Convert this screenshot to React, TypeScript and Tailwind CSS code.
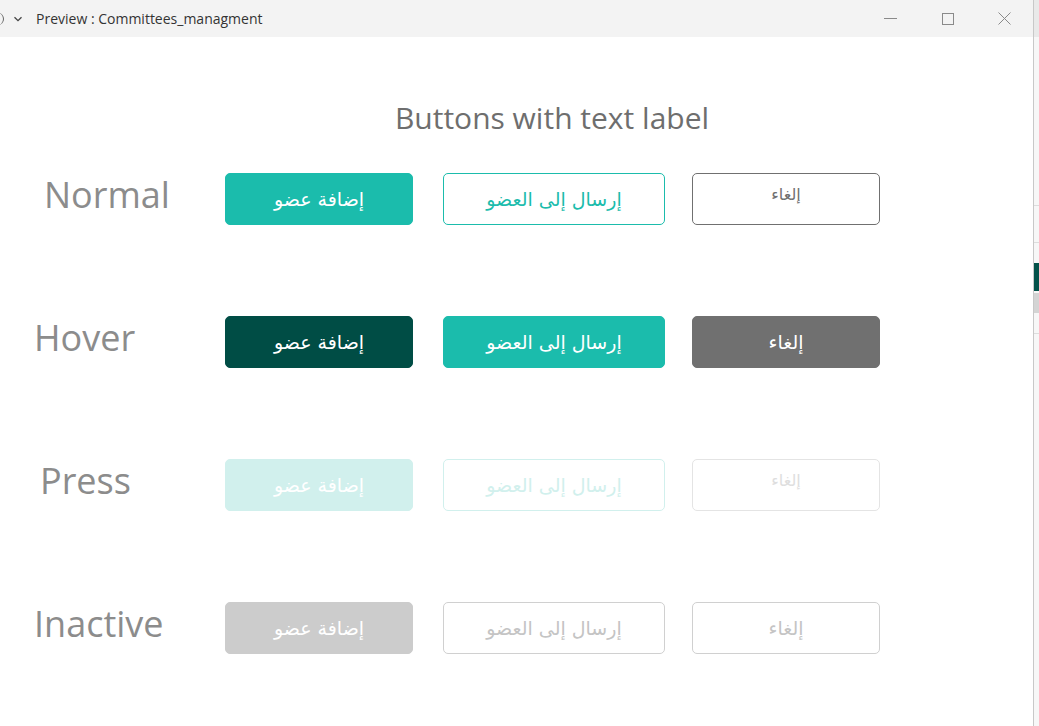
import React from 'react'

type Variant = {
  add: string
  send: string
  cancel: string
  cancelText?: string
}

const rows: { label: string; pad: string; v: Variant }[] = [
  {
    label: 'Normal',
    pad: 'pl-[44px]',
    v: {
      add: 'bg-[#1bbcac] text-white border-[#1bbcac]',
      send: 'bg-white text-[#1bbcac] border-[#1bbcac]',
      cancel: 'bg-white text-[#707070] border-[#707070]',
      cancelText: 'text-[16px] -mt-[8px]',
    },
  },
  {
    label: 'Hover',
    pad: 'pl-[34px]',
    v: {
      add: 'bg-[#004d45] text-white border-[#004d45]',
      send: 'bg-[#1bbcac] text-white border-[#1bbcac]',
      cancel: 'bg-[#707070] text-white border-[#707070]',
    },
  },
  {
    label: 'Press',
    pad: 'pl-[40px]',
    v: {
      add: 'bg-[#d1f0ed] text-white border-[#d1f0ed]',
      send: 'bg-white text-[#d1f0ed] border-[#d1f0ed]',
      cancel: 'bg-white text-[#dedede] border-[#e4e4e4]',
      cancelText: 'text-[16px] -mt-[8px]',
    },
  },
  {
    label: 'Inactive',
    pad: 'pl-[34px]',
    v: {
      add: 'bg-[#cccccc] text-white border-[#cccccc]',
      send: 'bg-white text-[#c4c4c4] border-[#d0d0d0]',
      cancel: 'bg-white text-[#c4c4c4] border-[#d0d0d0]',
    },
  },
]

const arabic = "font-['DejaVu_Sans','Open_Sans',sans-serif] font-normal"

function Btn({ cls, text, w, textCls = 'text-[19px]' }: { cls: string; text: string; w: string; textCls?: string }) {
  return (
    <div className={`${w} h-[52px] rounded-[5px] border flex items-center justify-center ${cls}`}>
      <span dir="rtl" className={`${arabic} ${textCls}`}>
        {text}
      </span>
    </div>
  )
}

export default function App() {
  return (
    <div className="w-[1039px] h-[726px] flex bg-white overflow-hidden font-['Open_Sans',sans-serif]">
      <div className="w-[1033px] flex flex-col">
        {/* title bar */}
        <div className="h-[37px] bg-[#f3f3f3] flex items-center text-[#333] shrink-0">
          <div className="w-[6px] h-[12px] border-r border-[#666] rounded-r-full -ml-[2px]" />
          <svg width="10" height="10" viewBox="0 0 10 10" className="ml-[9px]">
            <path d="M1.5 3.2 L5 6.7 L8.5 3.2" fill="none" stroke="#444" strokeWidth="1.3" />
          </svg>
          <span className="ml-[13px] text-[14px]">Preview : Committees_managment</span>
          <div className="ml-auto flex items-center h-full">
            <div className="w-[57px] flex justify-center">
              <div className="w-[13px] h-px bg-[#8a8a8a]" />
            </div>
            <div className="w-[57px] flex justify-center">
              <div className="w-[12px] h-[12px] border border-[#8a8a8a]" />
            </div>
            <div className="w-[57px] flex justify-center">
              <svg width="13" height="13" viewBox="0 0 13 13">
                <path d="M0.5 0.5 L12.5 12.5 M12.5 0.5 L0.5 12.5" stroke="#8a8a8a" strokeWidth="1" />
              </svg>
            </div>
          </div>
        </div>

        {/* content */}
        <div className="flex-1 flex flex-col">
          <div className="mt-[60px] ml-[225px] w-[654px] h-[40px] flex items-center justify-center text-[30px] text-[#6e6e6e]">
            Buttons with text label
          </div>
          <div className="mt-[36px] flex flex-col gap-[91px]">
            {rows.map(r => (
              <div key={r.label} className="flex items-center">
                <div className={`w-[225px] ${r.pad} text-[36px] text-[#8c8c8c] leading-none -mt-[9px]`}>
                  {r.label}
                </div>
                <Btn cls={r.v.add} text="إضافة عضو" w="w-[188px]" />
                <div className="w-[30px]" />
                <Btn cls={r.v.send} text="إرسال إلى العضو" w="w-[222px]" />
                <div className="w-[27px]" />
                <Btn cls={r.v.cancel} text="إلغاء" w="w-[188px]" textCls={r.v.cancelText ?? 'text-[19px]'} />
              </div>
            ))}
          </div>
        </div>
      </div>

      {/* sliver of neighbouring window */}
      <div className="w-[6px] border-l border-[#c8c8c8] flex flex-col bg-[#f7f7f7]">
        <div className="h-[37px] bg-[#e9e9e9]" />
        <div className="h-[168px]" />
        <div className="h-[38px] border-y border-[#ddd]" />
        <div className="h-[28px] bg-[#03524a] mt-[20px]" />
        <div className="h-[20px] bg-[#d4d4d4] mt-[2px]" />
        <div className="h-[40px] mt-[20px] border-t border-[#ddd]" />
      </div>
    </div>
  )
}
